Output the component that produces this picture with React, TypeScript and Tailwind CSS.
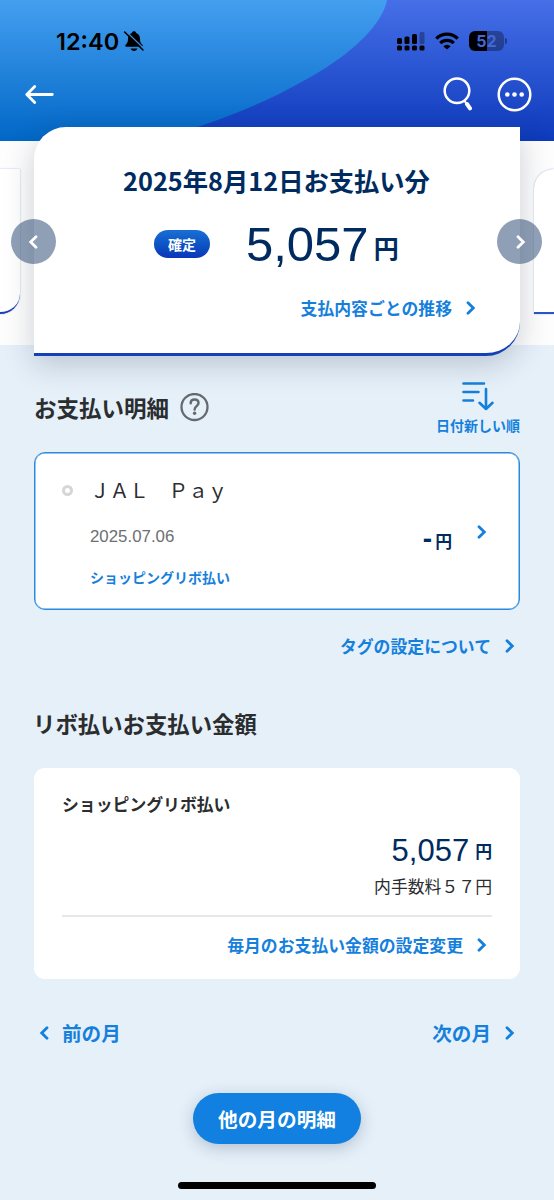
import React from 'react';

type ChevronProps = { dir?: 'left' | 'right'; className?: string };

const Chevron = ({ dir = 'right', className = '' }: ChevronProps) => (
    <svg width="10" height="14" viewBox="0 0 10 14" fill="none" className={`shrink-0 ${className}`}>
        <path
            d={dir === 'right' ? 'M2 1.700 7.300 7 2 12.300' : 'M8 1.700 2.700 7 8 12.300'}
            stroke="currentColor"
            strokeWidth="2.800"
            strokeLinecap="round"
        />
    </svg>
);

const HeaderBackground = () => (
    <svg
        className="absolute inset-0 -z-10"
        width="554"
        height="141"
        viewBox="0 0 554 141"
        preserveAspectRatio="none"
    >
        <defs>
            <linearGradient id="deep" x1="0" y1="0" x2="0" y2="1">
                <stop offset="0" stopColor="#466fe8" />
                <stop offset="1" stopColor="#0d3abb" />
            </linearGradient>
            <linearGradient id="sky" x1="0" y1="0" x2="0" y2="141" gradientUnits="userSpaceOnUse">
                <stop offset="0" stopColor="#449ff0" />
                <stop offset="1" stopColor="#0167c6" />
            </linearGradient>
        </defs>
        <rect width="554" height="141" fill="url(#deep)" />
        <path
            d="M0 0H387C383 22 357 49 319 72C277 97 240 113 197 127C170 136 140 142 100 150H0Z"
            fill="url(#sky)"
        />
    </svg>
);

const StatusBar = () => (
    <div className="flex h-[82px] items-center justify-between pr-[47px] pl-[56px] text-black">
        <div className="flex items-center gap-1">
            <span className="mt-0.5 font-['Inter',sans-serif] text-[23.500px] leading-none font-semibold">
                12:40
            </span>
            <svg width="22" height="22" viewBox="0 0 22 22" fill="none">
                <path
                    d="M11 1.200c-1.200 0-2 .7-2.200 1.700C6.200 3.800 5 6 5 8.600c0 3.400-.6 4.800-2.300 6.200-.9.800-.6 2 .7 2h15.200c1.300 0 1.600-1.200.7-2-1.700-1.400-2.300-2.800-2.300-6.200 0-2.600-1.200-4.800-3.800-5.700C13 1.900 12.200 1.200 11 1.200Z"
                    fill="#000"
                />
                <path d="M7.600 18.500h6.800c-.4 1.500-1.700 2.500-3.400 2.500s-3-1-3.400-2.500Z" fill="#000" />
                <path d="M3 1.200 21.200 19" stroke="#358bdf" strokeWidth="1.400" />
                <path d="M1.600 2 20 20" stroke="#000" strokeWidth="1.600" strokeLinecap="round" />
            </svg>
        </div>
        <div className="flex items-center gap-2.5">
            <svg width="28" height="20" viewBox="0 0 28 20">
                <rect x="0" y="7" width="5" height="6" rx="1.500" />
                <rect x="7.500" y="5.500" width="5" height="7.500" rx="1.500" />
                <rect x="15" y="3" width="5" height="10" rx="1.500" />
                <rect x="22.500" y="1" width="5" height="12" rx="1.500" opacity=".3" />
                <rect x="0" y="14.500" width="5" height="5" rx="1.500" />
                <rect x="7.500" y="14.500" width="5" height="5" rx="1.500" />
                <rect x="15" y="14.500" width="5" height="5" rx="1.500" />
                <rect x="22.500" y="14.500" width="5" height="5" rx="1.500" />
            </svg>
            <svg width="24" height="18" viewBox="0 0 24 18" fill="none" stroke="#000" strokeWidth="3.300">
                <path d="M1.300 6.600a15.200 15.200 0 0 1 21.400 0" />
                <path d="M5.200 11.100a9.700 9.700 0 0 1 13.600 0" />
                <path d="M12 17.600 8.300 14.200a5.200 5.200 0 0 1 7.400 0Z" fill="#000" stroke="none" />
            </svg>
            <div className="flex items-center gap-px">
                <div className="flex h-5 w-[35px] items-center justify-center rounded-[6px] bg-[linear-gradient(90deg,#000_52%,#00000052_52%)] font-['Inter',sans-serif] text-[16px] leading-none font-bold">
                    <span className="text-[#3f69dc]">5</span>
                    <span className="text-[#4367d6]">2</span>
                </div>
                <span className="h-[6px] w-[2px] rounded-r-full bg-black/40" />
            </div>
        </div>
    </div>
);

const NavBar = () => (
    <div className="flex h-6 items-center justify-between pr-[22px] pl-[25px]">
        <svg width="29" height="20" viewBox="0 0 29 20" fill="none">
            <path
                d="M27.300 10.500H2M9.700 2.500 1.800 10.500l7.900 8"
                stroke="#fff"
                strokeWidth="2.800"
                strokeLinecap="round"
                strokeLinejoin="round"
            />
        </svg>
        <div className="flex items-center gap-[25px]">
            <svg width="30" height="34" viewBox="0 0 30 34" fill="none" stroke="#fff">
                <circle cx="15" cy="13.700" r="12.300" strokeWidth="2.500" />
                <path d="M22 23.200 24 26" strokeWidth="2" />
                <path d="M25 27 28 31.300" strokeWidth="4" strokeLinecap="round" />
            </svg>
            <svg width="35" height="35" viewBox="0 0 35 35" fill="none">
                <circle cx="17.500" cy="17.500" r="15.800" stroke="#fff" strokeWidth="2.500" />
                <circle cx="10.300" cy="17.500" r="2.300" fill="#fff" />
                <circle cx="17.500" cy="17.500" r="2.300" fill="#fff" />
                <circle cx="24.700" cy="17.500" r="2.300" fill="#fff" />
            </svg>
        </div>
    </div>
);

const Carousel = () => (
    <section className="relative z-10 flex h-[204px] items-start bg-[#fdfdfd]">
        <div className="mt-7 h-[145px] w-5 shrink-0 rounded-br-[20px] border-b-2 border-b-[#1d3fb8] bg-white shadow-[0_0_1.500px_#8c9fd0]" />
        <div className="-mt-[14px] ml-[14px] h-[229px] w-[486px] shrink-0 rounded-tl-[32px] rounded-br-[34px] border-b-[3px] border-b-[#1440b8] bg-white pt-[35px] text-[#002b60] shadow-[0_8px_30px_rgba(30,40,70,0.22)]">
            <h1 className="-ml-px text-center text-[25.300px] leading-9 font-bold">
                2025年8月12日お支払い分
            </h1>
            <div className="mt-4 flex h-[60px] items-center pl-[120px]">
                <span className="flex h-7 w-14 items-center justify-center rounded-full bg-gradient-to-b from-[#1a6fd3] to-[#0c36b8] pb-px text-[14px] leading-none font-bold text-white">
                    確定
                </span>
                <span className="ml-9 font-['Liberation_Sans',sans-serif] text-[49px] leading-[60px]">
                    5,057
                </span>
                <span className="mt-1.5 ml-[5px] text-[25px] leading-none font-bold">円</span>
            </div>
            <a className="mt-[22px] flex h-6 items-center justify-end pr-[44px] text-[16.850px] leading-6 font-bold text-[#1580dc]">
                支払内容ごとの推移
                <Chevron className="ml-[14px]" />
            </a>
        </div>
        <div className="mt-7 ml-[14px] h-[145px] w-5 shrink-0 rounded-tl-[20px] border-b-2 border-b-[#2b55c5] bg-white shadow-[0_0_1.500px_#8c9fd0]" />
        <button className="absolute top-[78px] left-[11px] flex size-[45px] items-center justify-center rounded-full bg-[#1f3f6b]/50 text-white">
            <Chevron dir="left" className="-ml-0.5" />
        </button>
        <button className="absolute top-[78px] right-[12px] flex size-[45px] items-center justify-center rounded-full bg-[#1f3f6b]/50 text-white">
            <Chevron className="ml-0.5" />
        </button>
    </section>
);

const App = () => {
    return (
        <div className="h-[1200px] w-[554px] overflow-hidden bg-[#e5f0f9] font-['Noto_Sans_CJK_JP',sans-serif] text-[#2b2d2f]">
            <header className="relative isolate h-[141px]">
                <HeaderBackground />
                <StatusBar />
                <NavBar />
            </header>
            <Carousel />

            <main className="px-[34px] pt-[35px]">
                {/* お支払い明細 */}
                <div className="flex h-[55px] items-center justify-between">
                    <h2 className="flex items-center gap-[11px] text-[22.500px] leading-8 font-bold">
                        <span className="-mt-0.5">お支払い明細</span>
                        <svg width="29" height="29" viewBox="0 0 29 29" fill="none" stroke="#666a6f">
                            <circle cx="14.500" cy="14" r="13" strokeWidth="2.300" />
                            <path
                                d="M10.700 10.300c0-2.300 1.600-3.700 3.900-3.700s3.900 1.400 3.900 3.500c0 2.900-3.900 3.200-3.900 6.300"
                                strokeWidth="2.500"
                                strokeLinecap="round"
                            />
                            <circle cx="14.600" cy="20.300" r="1.700" fill="#666a6f" stroke="none" />
                        </svg>
                    </h2>
                    <div className="flex flex-col items-center text-[#1580dc]">
                        <svg
                            width="32"
                            height="30"
                            viewBox="0 0 32 30"
                            fill="none"
                            stroke="currentColor"
                            strokeWidth="2.600"
                            strokeLinecap="round"
                            strokeLinejoin="round"
                        >
                            <path d="M1.500 2.500h20.500M1.500 11h15M1.500 19.500h9.500M24 8v20M17.500 21.800 24 28l6.500-6.200" />
                        </svg>
                        <span className="mt-1 text-[14px] leading-5 font-bold">日付新しい順</span>
                    </div>
                </div>

                <div className="mt-[17px] flex h-[158px] items-start rounded-[11px] border border-[#2b8ade] bg-white pl-[27px] shadow-[inset_0_0_0_0.500px_#2b8ade]">
                    <span className="mt-8 size-[11px] rounded-full border-[3px] border-[#d5d6d8]" />
                    <div className="ml-[17px] flex flex-col">
                        <span className="mt-[22px] text-[19.650px] leading-[30px] whitespace-pre">
                            ＪＡＬ　Ｐａｙ
                        </span>
                        <span className="mt-5 font-['Liberation_Sans',sans-serif] text-[16.850px] leading-6 text-[#6c6f73]">
                            2025.07.06
                        </span>
                        <span className="mt-[18px] text-[14px] leading-5 font-bold text-[#1580dc]">
                            ショッピングリボ払い
                        </span>
                    </div>
                    <div className="mt-[66px] mr-8 ml-auto flex items-start text-[#002b60]">
                        <span className="mt-2 font-['Liberation_Sans',sans-serif] text-[28px] leading-6 font-bold">
                            -
                        </span>
                        <span className="mt-2.5 ml-[3px] text-[16.850px] leading-6 font-bold">
                            円
                        </span>
                        <Chevron className="mt-1.5 ml-[25px] text-[#1580dc]" />
                    </div>
                </div>

                <a className="mt-6 flex h-6 items-center justify-end pr-[5px] text-[16.850px] leading-6 font-bold text-[#1580dc]">
                    タグの設定について
                    <Chevron className="ml-[14px]" />
                </a>

                {/* リボ払い */}
                <h2 className="mt-[49px] -ml-px text-[22.400px] leading-8 font-bold">
                    リボ払いお支払い金額
                </h2>
                <div className="mt-[29px] h-[211px] rounded-[11px] bg-white px-7 pt-6">
                    <h3 className="text-[16.850px] leading-6 font-bold">ショッピングリボ払い</h3>
                    <div className="mt-[17px] flex h-9 items-center justify-end text-[#002b60]">
                        <span className="font-['Liberation_Sans',sans-serif] text-[31px] leading-9">
                            5,057
                        </span>
                        <span className="ml-1.5 text-[16.850px] leading-6 font-bold">円</span>
                    </div>
                    <p className="mt-[5px] text-right text-[16.850px] leading-6">内手数料５７円</p>
                    <hr className="mt-[17px] border-t-2 border-[#e6e8ea]" />
                    <a className="mt-4 flex h-6 items-center justify-end pr-[5px] text-[16.850px] leading-6 font-bold text-[#1580dc]">
                        毎月のお支払い金額の設定変更
                        <Chevron className="ml-[14px]" />
                    </a>
                </div>

                <nav className="mt-10 flex h-7 items-center justify-between px-[5px] text-[19.600px] leading-7 font-bold text-[#1580dc]">
                    <a className="flex items-center gap-[13px]">
                        <Chevron dir="left" />
                        前の月
                    </a>
                    <a className="flex items-center gap-[14px]">
                        次の月
                        <Chevron />
                    </a>
                </nav>
            </main>

            <button className="mx-auto mt-[46px] flex h-[51px] w-[168px] items-center justify-center rounded-full bg-[#1180e0] text-[19.650px] leading-none font-bold text-white shadow-[0_4px_16px_rgba(30,50,80,0.25)]">
                他の月の明細
            </button>
            <div className="mx-auto mt-[38px] h-[7px] w-[198px] rounded-full bg-black" />
        </div>
    );
};

export default App;
